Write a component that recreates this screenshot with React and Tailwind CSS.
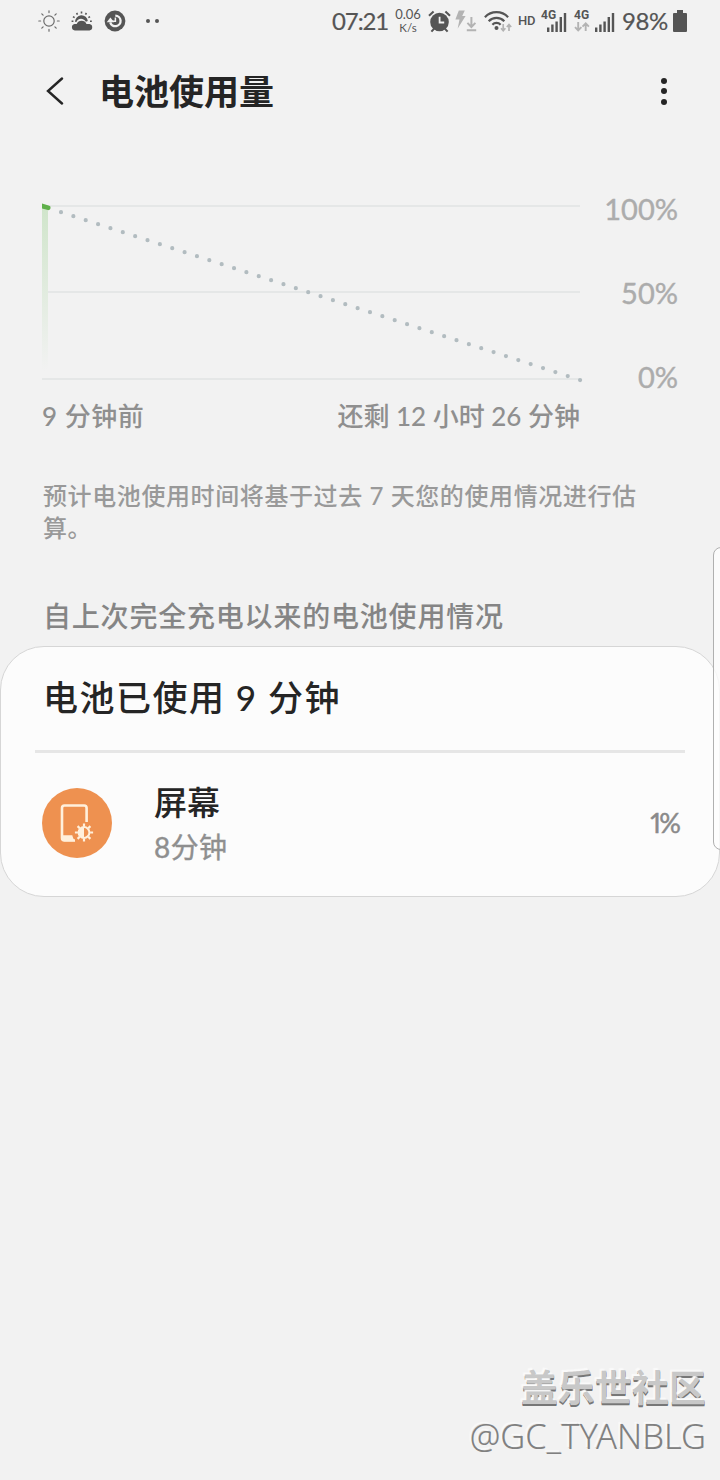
import React from 'react';

// Small glyphs on the left of the status bar
const SunIcon = () => (
  <svg className="w-[22px] h-[22px]" viewBox="0 0 22 22" fill="none" stroke="#6c6c6c" strokeWidth="1.2" strokeLinecap="round">
    <circle cx="11" cy="11" r="5.2" />
    <path d="M11 .8v1.8M11 19.4v1.8M.8 11h1.8M19.4 11h1.8M3.8 3.8l1.3 1.3M16.9 16.9l1.3 1.3M3.8 18.2l1.3-1.3M16.9 5.1l1.3-1.3" />
  </svg>
);

const CloudSunIcon = () => (
  <svg className="w-[22px] h-[20px]" viewBox="0 0 22 20">
    <path d="M4.2 11a6.3 6.3 0 0 1 12.6-.9l-1.9.6a5.4 5.4 0 0 0-7.9-2 5.4 5.4 0 0 0-1.6 2.4z" fill="#555" />
    <path d="M10.5 .6v1.9M5.6 2l.9 1.6M15.4 2l-.9 1.6M2 5.6l1.6 1M19 5.6l-1.6 1M.6 10.2h1.8M19 10.2h1.8" stroke="#555" strokeWidth="1.6" />
    <path d="M3.8 19.4a3.3 3.3 0 0 1-.3-6.5h2.2a5.4 5.4 0 0 1 9.8 0h3a3.3 3.3 0 0 1 0 6.5z" fill="#555" />
  </svg>
);

const SyncIcon = () => (
  <svg className="w-[22px] h-[22px]" viewBox="0 0 22 22">
    <circle cx="11" cy="11" r="10.4" fill="#555" />
    <path d="M11.3 5.6a5.3 5.3 0 1 1-5.1 6.8" fill="none" stroke="#f2f2f2" strokeWidth="2.3" />
    <path d="M2.7 12.2l3.7-4.6 3.7 4.6z" fill="#f2f2f2" />
    <path d="M11.4 7.6v3.6H8" fill="none" stroke="#f2f2f2" strokeWidth="1.5" />
  </svg>
);

const AlarmIcon = () => (
  <svg className="w-[23px] h-[23px]" viewBox="0 0 23 23" fill="none" stroke="#555" strokeWidth="2.4">
    <circle cx="11.5" cy="12" r="9.3" fill="#555" stroke="none" />
    <path d="M1 5.7L5.6 1.5M22 5.7l-4.6-4.2M3.4 21.6l3-3.2M19.6 21.6l-3-3.2" strokeWidth="2.1" />
    <path d="M11.6 6.7v5.8h4.6" stroke="#f2f2f2" strokeWidth="1.8" />
  </svg>
);

const FlashDownIcon = () => (
  <svg className="w-[22px] h-[22px]" viewBox="0 0 22 22">
    <path d="M3.8.6h6L7.2 6h3.4L2.7 18.6l1.8-9H.4z" fill="#b3b3b3" />
    <path d="M16.4 7v10M12.4 12.9l4 4.1 4-4.1M11.8 20.3h9.4" fill="none" stroke="#b3b3b3" strokeWidth="2" />
  </svg>
);

const WifiIcon = () => (
  <svg className="w-[29px] h-[23px]" viewBox="0 0 29 23" fill="none">
    <g stroke="#555" strokeWidth="2.2">
      <path d="M.9 7.2a16 16 0 0 1 23.2 0" />
      <path d="M4.7 11.2a10.7 10.7 0 0 1 15.6 0" />
      <path d="M8.4 14.7a5.7 5.7 0 0 1 8.2 0" />
    </g>
    <circle cx="12.5" cy="18" r="2" fill="#555" />
    <path d="M19.2 14v6.6M17 18.3l2.2 2.4 2.2-2.4M25 21v-6.4M22.8 17l2.2-2.4 2.2 2.4" stroke="#b3b3b3" strokeWidth="1.7" />
  </svg>
);

const SignalBars = () => (
  <svg className="w-[20px] h-[20px]" viewBox="0 0 20 20" fill="#555">
    <rect x="0" y="15.5" width="2.4" height="4.5" />
    <rect x="4.2" y="12.5" width="2.4" height="7.5" />
    <rect x="8.4" y="9.5" width="2.4" height="10.5" />
    <rect x="12.6" y="5" width="2.4" height="15" />
    <rect x="16.8" y="1" width="2.4" height="19" />
  </svg>
);

const StatusBar = () => (
  <div className="flex h-[42px] items-center pl-[38px] text-[#555]">
    <SunIcon />
    <div className="ml-[11px]"><CloudSunIcon /></div>
    <div className="ml-[11px]"><SyncIcon /></div>
    <div className="ml-[20px] flex gap-[5px]">
      <div className="size-1 rounded-full bg-[#555]"></div>
      <div className="size-1 rounded-full bg-[#555]"></div>
    </div>
    <div className="ml-[173px] w-[56px] whitespace-nowrap text-[24px] leading-[42px] tracking-[-1.1px] [-webkit-text-stroke:0.2px_#555]">07:21</div>
    <div className="ml-[5px] flex w-[30px] flex-col items-center text-[13px] leading-[14px]">
      <span>0.06</span>
      <span className="text-[11.5px] leading-[14px]">K/s</span>
    </div>
    <div className="ml-[5px]"><AlarmIcon /></div>
    <div className="ml-[4px]"><FlashDownIcon /></div>
    <div className="ml-[7px]"><WifiIcon /></div>
    <div className="ml-[5px] w-[19px] font-['Roboto',sans-serif] text-[13px] font-medium tracking-[-0.3px]">HD</div>
    <div className="relative ml-[4px] flex h-[22px] w-[26px] items-end justify-end">
      <span className="absolute left-0 top-0 font-['Roboto',sans-serif] text-[12px] font-bold leading-[10px]">4G</span>
      <SignalBars />
    </div>
    <div className="ml-[7px] h-[22px] w-[16px]">
      <div className="font-['Roboto',sans-serif] text-[12px] font-bold leading-[10px]">4G</div>
      <svg className="mt-[2px] h-[10px] w-[16px]" viewBox="0 0 16 10" fill="none" stroke="#b3b3b3" strokeWidth="1.9">
        <path d="M4.2 0v8M1 5.2l3.2 3.2 3.2-3.2M11.7 9V1.4M8.5 4.6l3.2-3.2 3.2 3.2" />
      </svg>
    </div>
    <div className="ml-[5px] flex h-[22px] items-end"><SignalBars /></div>
    <div className="ml-[7px] w-[46px] whitespace-nowrap text-[24px] leading-[42px] tracking-[-0.4px] [-webkit-text-stroke:0.2px_#555]">98%</div>
    <svg className="ml-[5px] h-[23px] w-[14px]" viewBox="0 0 14 23" fill="#555">
      <path d="M4 0h6v3h3a1 1 0 0 1 1 1v17a1 1 0 0 1-1 1H1a1 1 0 0 1-1-1V4a1 1 0 0 1 1-1h3z" />
    </svg>
  </div>
);

const Header = () => (
  <header className="flex h-[98px] items-center pl-[46px] pr-[55px]">
    <svg className="h-[28px] w-[18px]" viewBox="0 0 18 28" fill="none" stroke="#252525" strokeWidth="2.4" strokeLinecap="round">
      <path d="M16 1.5L2 14l14 12.5" />
    </svg>
    <h1 className="ml-[35px] text-[35px] font-bold leading-[50px] text-[#252525]">电池使用量</h1>
    <div className="ml-auto mr-[-2px] flex flex-col gap-[4.5px]">
      <div className="size-[6px] rounded-full bg-[#252525]"></div>
      <div className="size-[6px] rounded-full bg-[#252525]"></div>
      <div className="size-[6px] rounded-full bg-[#252525]"></div>
    </div>
  </header>
);

const BatteryChart = () => (
  <section className="mt-[56px] pl-[42px] pr-[42px]">
    <div className="flex h-[198px] justify-between">
      <svg className="mt-[4px] h-[186px] w-[542px]" viewBox="0 0 542 186" fill="none">
        <defs>
          <linearGradient id="usage" x1="0" y1="0" x2="0" y2="1">
            <stop offset="0" stopColor="#d0e5cb" />
            <stop offset="1" stopColor="#f2f2f2" />
          </linearGradient>
        </defs>
        <path d="M0 6h538M0 92h538M0 179h538" stroke="#e5e7e7" strokeWidth="2" />
        <rect x="0" y="8" width="6" height="163" fill="url(#usage)" />
        <path d="M19 12.2L539 180.4" stroke="#b2bcc0" strokeWidth="4.2" strokeLinecap="round" strokeDasharray="0 12.99" />
        <path d="M0 3.6l6.6 1.9a2.2 2.2 0 0 1-.6 4.6L0 8.4z" fill="#5fb04a" />
      </svg>
      <div className="flex w-[80px] flex-col gap-[44px] text-right text-[29px] leading-[40px] text-[#acacac] [-webkit-text-stroke:0.4px_#acacac]">
        <span className="mt-[-7px]">100%</span>
        <span>50%</span>
        <span>0%</span>
      </div>
    </div>
    <div className="flex h-[46px] w-[538px] justify-between text-[26px] leading-[45px] font-medium text-[#8f8f8f]">
      <span className="tracking-[0.5px]">9 分钟前</span>
      <span>还剩 12 小时 26 分钟</span>
    </div>
  </section>
);

const ScreenIcon = () => (
  <div className="flex size-[70px] items-center justify-center rounded-full bg-[#ee9150]">
    <svg className="size-[70px]" viewBox="0 0 70 70" fill="none" stroke="#fff0dc" strokeWidth="2.6">
      <path d="M44.6 34V20a2.5 2.5 0 0 0-2.5-2.5h-19.6A2.5 2.5 0 0 0 20 20v30a2.5 2.5 0 0 0 2.5 2.5H33" />
      <path d="M20 47.2h10.3c.4 2 1.3 4 2.9 6H22a2 2 0 0 1-2-2z" fill="#fff0dc" stroke="none" />
      <circle cx="42" cy="44.5" r="5.4" strokeWidth="2" />
      <path d="M42 39.1a5.4 5.4 0 0 0 0 10.8z" fill="#fff0dc" stroke="none" />
      <path d="M42 35.4v3M42 50.6v3M32.9 44.5h3M48.1 44.5h3M35.6 38.1l2.1 2.1M46.3 48.8l2.1 2.1M35.6 50.9l2.1-2.1M46.3 40.2l2.1-2.1" strokeWidth="2.2" />
    </svg>
  </div>
);

const UsageCard = () => (
  <section className="h-[251px] rounded-[44px] border border-[#d6d6d6] bg-[#fcfcfc] px-[34px]">
    <h2 className="h-[103px] pl-[8px] text-[35px] leading-[101px] font-medium tracking-[1.5px] text-[#252525]">电池已使用 9 分钟</h2>
    <div className="h-[3px] bg-[#e6e6e6]"></div>
    <div className="flex items-start px-[7px] pt-[35px]">
      <ScreenIcon />
      <div className="ml-[42px] mt-[-9px] flex flex-col">
        <span className="text-[33px] leading-[46px] font-medium text-[#252525]">屏幕</span>
        <span className="text-[28px] leading-[44px] tracking-[0.4px] text-[#8f8f8f] [-webkit-text-stroke:0.4px_#8f8f8f]">8分钟</span>
      </div>
      <span className="ml-auto mr-[-1px] text-[27px] leading-[70px] tracking-[-1.8px] proportional-nums text-[#8a8a8a] [-webkit-text-stroke:0.5px_#8a8a8a]">1%</span>
    </div>
  </section>
);

const App = () => {
  return (
    <div className="relative h-[1480px] w-[720px] overflow-hidden bg-[#f2f2f2] font-['Lato','Noto_Sans_CJK_SC',sans-serif]">
      <StatusBar />
      <Header />
      <BatteryChart />
      <p className="mt-[40px] h-[64px] w-[620px] whitespace-nowrap pl-[43px] text-[24px] leading-[32px] font-medium tracking-[0.6px] text-[#999]">
        预计电池使用时间将基于过去 7 天您的使用情况进行估
        <br />
        算。
      </p>
      <h3 className="mt-[50px] h-[52px] pl-[43px] text-[28px] leading-[44px] font-medium tracking-[0.8px] text-[#858585]">
        自上次完全充电以来的电池使用情况
      </h3>
      <UsageCard />

      {/* Edge panel handle */}
      <div className="absolute left-[713px] top-[547px] h-[303px] w-[20px] rounded-[8px] border border-[#b0b0b0] bg-[#fcfcfc]/80"></div>

      {/* Watermark */}
      <div className="absolute bottom-[20px] right-[14px] text-right whitespace-nowrap">
        <div className="text-[37px] leading-[48px] font-bold text-[#c8c8c8] [text-shadow:-2px_-2px_1px_#fafafa,0_1px_0_#777,0_2px_0_#777]">盖乐世社区</div>
        <div className="font-['Noto_Sans',sans-serif] text-[34.5px] leading-[48px] font-light text-[#808080] [text-shadow:-2px_-2px_1px_#fafafa,-1px_-1px_0_#d8d8d8]">@GC_TYANBLG</div>
      </div>
    </div>
  );
};

export default App;
